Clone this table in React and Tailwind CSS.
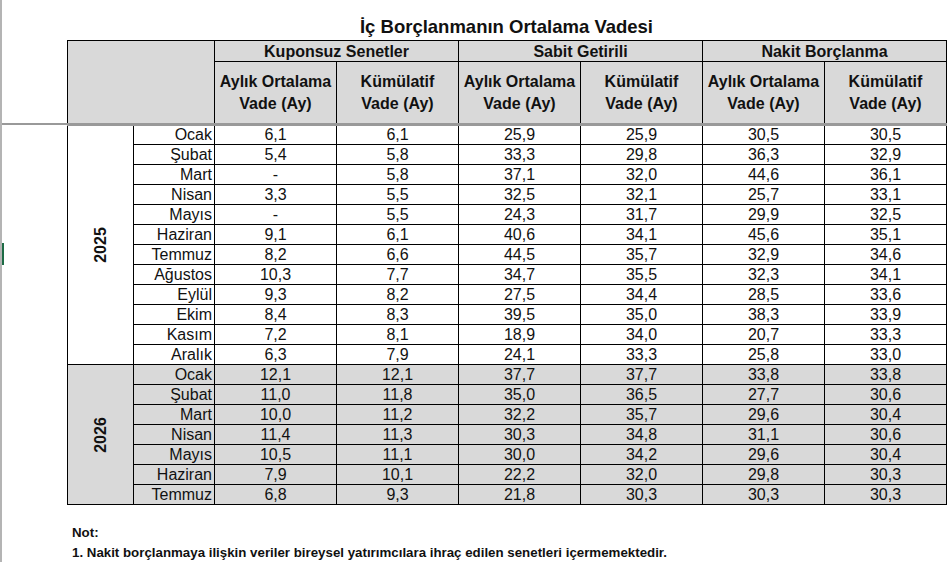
import React from "react";

const y2025 = [
  ["Ocak", "6,1", "6,1", "25,9", "25,9", "30,5", "30,5"],
  ["Şubat", "5,4", "5,8", "33,3", "29,8", "36,3", "32,9"],
  ["Mart", "-", "5,8", "37,1", "32,0", "44,6", "36,1"],
  ["Nisan", "3,3", "5,5", "32,5", "32,1", "25,7", "33,1"],
  ["Mayıs", "-", "5,5", "24,3", "31,7", "29,9", "32,5"],
  ["Haziran", "9,1", "6,1", "40,6", "34,1", "45,6", "35,1"],
  ["Temmuz", "8,2", "6,6", "44,5", "35,7", "32,9", "34,6"],
  ["Ağustos", "10,3", "7,7", "34,7", "35,5", "32,3", "34,1"],
  ["Eylül", "9,3", "8,2", "27,5", "34,4", "28,5", "33,6"],
  ["Ekim", "8,4", "8,3", "39,5", "35,0", "38,3", "33,9"],
  ["Kasım", "7,2", "8,1", "18,9", "34,0", "20,7", "33,3"],
  ["Aralık", "6,3", "7,9", "24,1", "33,3", "25,8", "33,0"],
];

const y2026 = [
  ["Ocak", "12,1", "12,1", "37,7", "37,7", "33,8", "33,8"],
  ["Şubat", "11,0", "11,8", "35,0", "36,5", "27,7", "30,6"],
  ["Mart", "10,0", "11,2", "32,2", "35,7", "29,6", "30,4"],
  ["Nisan", "11,4", "11,3", "30,3", "34,8", "31,1", "30,6"],
  ["Mayıs", "10,5", "11,1", "30,0", "34,2", "29,6", "30,4"],
  ["Haziran", "7,9", "10,1", "22,2", "32,0", "29,8", "30,3"],
  ["Temmuz", "6,8", "9,3", "21,8", "30,3", "30,3", "30,3"],
];

function YearBlock({ year, rows, gray }) {
  const bg = gray ? "bg-[#d9d9d9]" : "bg-white";
  return rows.map((r, i) => (
    <tr key={year + r[0]} className={`h-[20px] ${bg}`}>
      {i === 0 && (
        <td rowSpan={rows.length} className="border border-black p-0 align-middle">
          <div className="flex items-center justify-center">
            <span className="-rotate-90 font-bold text-[16px] leading-none">{year}</span>
          </div>
        </td>
      )}
      <td className="border border-black p-0 pr-[2px] text-right leading-[18px]">{r[0]}</td>
      {r.slice(1).map((v, j) => (
        <td key={j} className="border border-black p-0 text-center leading-[18px]">
          {v}
        </td>
      ))}
    </tr>
  ));
}

export default function App() {
  const groups = ["Kuponsuz Senetler", "Sabit Getirili", "Nakit Borçlanma"];
  return (
    <div
      className="relative w-[947px] h-[562px] overflow-hidden bg-white text-[#111] border-l-2 border-[#b4b4b4]"
      style={{ fontFamily: '"Liberation Sans", Arial, sans-serif' }}
    >
      <div className="absolute left-0 top-[243px] w-[2px] h-[22px] bg-[#1d6b45]" />
      <div className="flex flex-col pl-[65px]">
        <div className="h-[40px] w-[879px] flex items-end justify-center pb-[4px]">
          <h1 className="text-[18.5px] font-bold leading-none">İç Borçlanmanın Ortalama Vadesi</h1>
        </div>
        <table className="border-collapse table-fixed w-[880px] text-[16px]">
          <colgroup>
            <col className="w-[66px]" />
            <col className="w-[81px]" />
            <col className="w-[122px]" />
            <col className="w-[122px]" />
            <col className="w-[122px]" />
            <col className="w-[122px]" />
            <col className="w-[122px]" />
            <col className="w-[122px]" />
          </colgroup>
          <thead className="bg-[#d9d9d9] font-bold">
            <tr className="h-[21px]">
              <th rowSpan={2} colSpan={2} className="border border-black border-b-[#999] border-b-2 p-0" />
              {groups.map((g) => (
                <th key={g} colSpan={2} className="border border-black p-0 text-center font-bold leading-[19px]">
                  {g}
                </th>
              ))}
            </tr>
            <tr className="h-[63px]">
              {[0, 1, 2].map((k) => (
                <React.Fragment key={k}>
                  <th className="border border-black border-b-2 border-b-[#999] p-0 text-center font-bold leading-[22px]">
                    Aylık Ortalama
                    <br />
                    Vade (Ay)
                  </th>
                  <th className="border border-black border-b-2 border-b-[#999] p-0 text-center font-bold leading-[22px]">
                    Kümülatif
                    <br />
                    Vade (Ay)
                  </th>
                </React.Fragment>
              ))}
            </tr>
          </thead>
          <tbody>
            <YearBlock year="2025" rows={y2025} gray={false} />
            <YearBlock year="2026" rows={y2026} gray={true} />
          </tbody>
        </table>
        <div className="mt-[18px] pl-[5px] text-[13.3px] font-bold leading-[20px] whitespace-nowrap">
          <div>Not:</div>
          <div>1. Nakit borçlanmaya ilişkin veriler bireysel yatırımcılara ihraç edilen senetleri içermemektedir.</div>
        </div>
      </div>
      <div className="absolute left-0 top-[123px] w-full h-[2px] bg-[#999]" />
    </div>
  );
}
